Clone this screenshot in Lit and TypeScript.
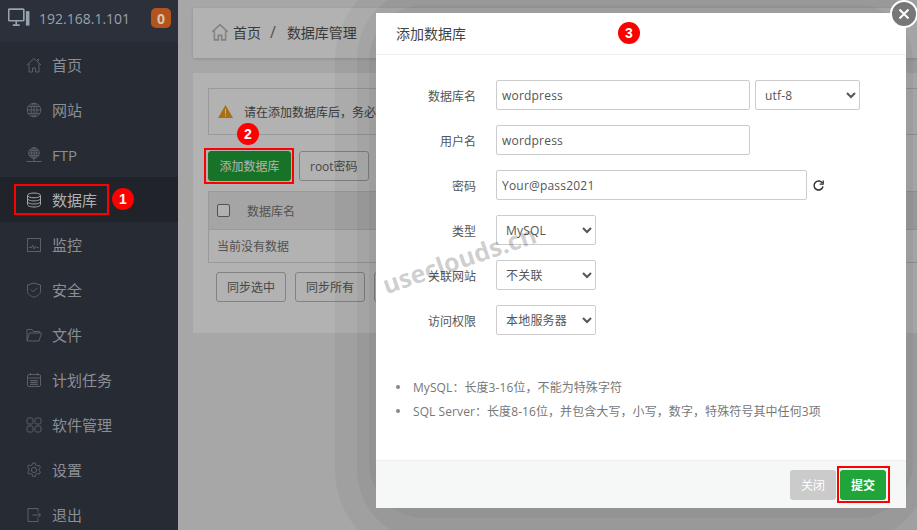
import { LitElement, css, html, svg } from 'lit';
import { customElement } from 'lit/decorators.js';

const icon = (body: unknown, size = 16) => html`<svg class="ico" width=${size} height=${size} viewBox="0 0 16 16" fill="none" stroke="currentColor" stroke-width="1">${body}</svg>`;

const navItems: [string, unknown][] = [
  ['首页', svg`<path d="M1 8 8 1.5 15 8M3 6.5V15h3.5v-4h3v4H13V6.5M11 2.5h1.5V4"/>`],
  ['网站', svg`<circle cx="8" cy="8" r="6.8"/><ellipse cx="8" cy="8" rx="3" ry="6.8"/><path d="M1.2 8h13.6M2 4.6h12M2 11.4h12M8 1.2v13.6"/>`],
  ['FTP', svg`<circle cx="8" cy="6" r="5.3"/><ellipse cx="8" cy="6" rx="2.4" ry="5.3"/><path d="M2.7 6h10.6M3.4 3.5h9.2M3.4 8.5h9.2M8 .7V14M.5 14.5h15"/>`],
  ['数据库', svg`<ellipse cx="8" cy="3.4" rx="6.5" ry="2.4"/><path d="M1.5 3.4v9.2c0 1.3 2.9 2.4 6.5 2.4s6.5-1.1 6.5-2.4V3.4M1.5 6.5C1.5 7.8 4.4 8.9 8 8.9s6.5-1.1 6.5-2.4M1.5 9.6c0 1.3 2.9 2.4 6.5 2.4s6.5-1.1 6.5-2.4"/>`],
  ['监控', svg`<rect x="1.5" y="1.5" width="13" height="13"/><path d="M3 10.5h2.5l1.2-2.5 1.6 4 1.4-2.5 1 1h2"/>`],
  ['安全', svg`<path d="M8 1 14.5 3v6.5c0 2.5-3 4.6-6.5 5.8-3.5-1.2-6.5-3.3-6.5-5.8V3Z"/><path d="m5 7.5 2.3 2.3L11.3 5.8"/>`],
  ['文件', svg`<path d="M1 14V2.5h5l1.5 2h6V6M1 14l2.5-8H15.5L13 14Z"/>`],
  ['计划任务', svg`<rect x="1.5" y="2.5" width="13" height="12" rx="1.5"/><path d="M1.5 6h13M4.5 1v2.5M11.5 1v2.5M4 8.5h8M4 10.5h8M4 12.5h8" /><path d="M6 8v5M8 8v5M10 8v5" stroke-width=".6"/>`],
  ['软件管理', svg`<rect x="1" y="1" width="6" height="6" rx="1.5"/><rect x="9" y="1" width="6" height="6" rx="1.5"/><rect x="1" y="9" width="6" height="6" rx="1.5"/><rect x="9" y="9" width="6" height="6" rx="1.5"/>`],
  ['设置', svg`<circle cx="8" cy="8" r="2.6"/><path d="M6.7 1h2.6l.4 2 1.6.9 1.9-.7 1.3 2.3-1.5 1.3v1.8l1.5 1.3-1.3 2.3-1.9-.7-1.6.9-.4 2H6.7l-.4-2-1.6-.9-1.9.7-1.3-2.3 1.5-1.3V6.5L1.5 5.2l1.3-2.3 1.9.7 1.6-.9Z"/>`],
  ['退出', svg`<path d="M12 4.5V1.5H2v13h10v-3M6.5 8h8M12 5.5 14.5 8 12 10.5"/>`],
];

@customElement('app-root')
export class AppRoot extends LitElement {
  static override styles = css`
    :host {
      display: flex;
      width: 917px;
      height: 530px;
      overflow: hidden;
      position: relative;
      font-family: "Open Sans", "Noto Sans CJK SC", sans-serif;
      font-size: 12px;
      color: #666;
      background: #f0f0f0;
    }
    .side {
      width: 178px;
      flex: none;
      background: #272b33;
      color: #8b8f95;
      z-index: 3;
    }
    .host-row {
      height: 42px;
      box-sizing: border-box;
      background: #2b303a;
      display: flex;
      align-items: center;
      padding: 0 7px 6px 8px;
      color: #97a3ac;
      font-size: 14px;
      gap: 9px;
    }
    .host-row .num {
      flex: 1;
    }
    .badge {
      width: 20px;
      height: 20px;
      border-radius: 5px;
      background: #b4531c;
      color: #d5c3b5;
      font-weight: 700;
      display: flex;
      align-items: center;
      justify-content: center;
    }
    .nav {
      height: 45px;
      display: flex;
      align-items: center;
      padding-left: 26px;
      gap: 10px;
      font-size: 15px;
    }
    .nav .ico {
      color: #5c6066;
    }
    .nav.on {
      background: #202329;
      color: #aeb1b3;
    }
    .nav.on .ico {
      color: #a4a7aa;
    }
    .ico {
      flex: none;
    }
    .main {
      flex: 1;
      min-width: 0;
      padding: 8px 0 0 15px;
      overflow: hidden;
    }
    .crumb {
      width: 900px;
      height: 50px;
      background: #fff;
      box-shadow: 0 1px 3px rgba(0, 0, 0, .15);
      display: flex;
      align-items: center;
      padding: 0 0 2px 18px;
      box-sizing: border-box;
      font-size: 14px;
      color: #555;
      gap: 4px;
    }
    .crumb .sep {
      margin: 0 7px 0 5px;
      color: #777;
      font-size: 16px;
    }
    .crumb .ico {
      color: #bbb;
    }
    .card {
      width: 900px;
      height: 260px;
      margin-top: 15px;
      background: #fff;
      padding: 15px;
      box-sizing: border-box;
    }
    .alert {
      height: 47px;
      box-sizing: border-box;
      border: 1px solid #ddd;
      display: flex;
      align-items: center;
      padding-left: 9px;
      gap: 11px;
      font-size: 12px;
      color: #555;
    }
    .btns {
      display: flex;
      align-items: center;
      gap: 8px;
      margin-top: 16px;
    }
    .btn {
      height: 30px;
      box-sizing: border-box;
      border: 1px solid #bbb;
      border-radius: 3px;
      background: #fff;
      display: flex;
      align-items: center;
      padding: 0 10px;
      color: #666;
      font-size: 12px;
    }
    .btn.green {
      background: #20a53a;
      border-color: #20a53a;
      color: #fff;
      width: 83px;
      justify-content: center;
      padding: 0;
    }
    .tbl {
      margin-top: 10px;
      border: 1px solid #ddd;
      height: 72px;
      box-sizing: border-box;
    }
    .thead {
      height: 38px;
      background: #ececec;
      border-bottom: 1px solid #ddd;
      display: flex;
      align-items: center;
      padding-left: 8px;
      gap: 17px;
      box-sizing: border-box;
      color: #777;
    }
    .check {
      width: 13px;
      height: 13px;
      box-sizing: border-box;
      border: 1px solid #767676;
      border-radius: 2px;
      background: #fff;
    }
    .tempty {
      height: 32px;
      display: flex;
      align-items: center;
      padding-left: 8px;
      color: #777;
    }
    .btns.lower {
      margin: 9px 0 0 8px;
      gap: 9px;
    }
    .veil {
      position: absolute;
      inset: 0 0 0 178px;
      background: rgba(0, 0, 0, .3);
      z-index: 2;
    }
    .mark {
      position: absolute;
      left: 178px;
      top: 0;
      z-index: 2;
    }
    .modal {
      position: absolute;
      left: 376px;
      top: 13px;
      width: 530px;
      height: 495px;
      background: #fff;
      z-index: 4;
      display: flex;
      flex-direction: column;
    }
    .m-head {
      height: 41px;
      box-sizing: content-box;
      flex: none;
      border-bottom: 1px solid #eee;
      display: flex;
      align-items: center;
      padding-left: 20px;
      font-size: 14px;
      color: #444;
    }
    .m-head span {
      margin-bottom: 2px;
    }
    .m-body {
      flex: 1;
      padding: 25px 0 0 20px;
      display: flex;
      flex-direction: column;
    }
    .row {
      display: flex;
      align-items: center;
      height: 30px;
      margin-bottom: 15px;
      gap: 5px;
    }
    .lab {
      width: 80px;
      margin-right: 15px;
      padding-top: 2px;
      text-align: right;
      color: #555;
      flex: none;
    }
    .inp,
    select {
      height: 30px;
      box-sizing: border-box;
      border: 1px solid #ccc;
      border-radius: 2px;
      background: #fff;
      font-family: inherit;
      font-size: 12px;
      color: #555;
      padding: 0 5px;
      outline: none;
      letter-spacing: .2px;
    }
    .w254 {
      width: 254px;
    }
    .w311 {
      width: 311px;
    }
    .w105 {
      width: 105px;
    }
    .w100 {
      width: 100px;
    }
    .row .ico {
      color: #333;
    }
    .tips {
      list-style: none;
      margin: 25px 0 0;
      padding: 0;
      color: #777;
      font-size: 12px;
      letter-spacing: .08px;
    }
    .tips li {
      height: 24px;
      display: flex;
      align-items: center;
      gap: 13px;
    }
    .tips li::before {
      content: "";
      width: 4px;
      height: 4px;
      border-radius: 50%;
      background: #888;
    }
    .m-foot {
      height: 48px;
      flex: none;
      background: #f6f8f8;
      border-top: 1px solid #eee;
      box-sizing: border-box;
      display: flex;
      align-items: center;
      justify-content: flex-end;
      padding-right: 20px;
      gap: 4px;
    }
    .fbtn {
      width: 46px;
      height: 30px;
      border-radius: 3px;
      display: flex;
      align-items: center;
      justify-content: center;
      color: #fff;
      font-size: 12px;
      background: #cbcbcb;
      position: relative;
    }
    .fbtn.ok {
      background: #20a53a;
      font-weight: 700;
    }
    .fbtn.ok::after {
      content: "";
      position: absolute;
      inset: -4px -4px -3px -3px;
      border: 2px solid #f00;
    }
    .close {
      position: absolute;
      left: 890px;
      top: 0;
      width: 24px;
      height: 24px;
      border: 2px solid #fff;
      border-radius: 50%;
      background: #777;
      z-index: 5;
      display: flex;
      align-items: center;
      justify-content: center;
      color: #fff;
    }
    .pin {
      position: absolute;
      width: 22px;
      height: 22px;
      border-radius: 50%;
      background: #f00;
      color: #fff;
      font: 700 14px "Liberation Sans", sans-serif;
      display: flex;
      align-items: center;
      justify-content: center;
      z-index: 6;
    }
    .p1 {
      left: 112px;
      top: 188px;
    }
    .p2 {
      left: 237px;
      top: 123px;
    }
    .p3 {
      left: 618px;
      top: 22px;
    }
    .box {
      position: absolute;
      box-sizing: border-box;
      border: 2px solid #f00;
      z-index: 6;
    }
    .b1 {
      left: 14px;
      top: 184px;
      width: 95px;
      height: 31px;
    }
    .b2 {
      left: 204px;
      top: 148px;
      width: 90px;
      height: 36px;
    }
    .wm {
      position: absolute;
      left: 383px;
      top: 268px;
      font: 700 25px "Open Sans", sans-serif;
      color: rgba(0, 0, 0, .2);
      transform: rotate(-19deg);
      transform-origin: left center;
      z-index: 7;
      pointer-events: none;
      white-space: nowrap;
    }
  `;

  override render() {
    return html`
      <aside class="side">
        <div class="host-row">
          ${icon(svg`<rect x=".5" y="1.5" width="11" height="8.5" rx=".5" stroke-width="1.2"/><path d="M6 10v3M3.5 13.2h5" stroke-width="1.2"/><rect x="13" y="3" width="2.6" height="10.5" fill="currentColor" stroke="none"/>`, 22)}
          <span class="num">192.168.1.101</span>
          <span class="badge">0</span>
        </div>
        ${navItems.map(([label, body]) => html`
          <div class="nav ${label === '数据库' ? 'on' : ''}">${icon(body)}<span>${label}</span></div>
        `)}
      </aside>
      <section class="main">
        <div class="crumb">
          ${icon(svg`<path d="M1 8 8 1.5 15 8M3 6.5V15h3.5v-4h3v4H13V6.5" stroke-width="1.4"/>`, 18)}
          <span>首页</span><span class="sep">/</span><span>数据库管理</span>
        </div>
        <div class="card">
          <div class="alert">
            <svg width="15" height="13" viewBox="0 0 15 13"><path d="M7.5 0 15 13H0Z" fill="#f0a020"/><path d="M7 4h1v5H7ZM7 10h1v1.5H7Z" fill="#fff"/></svg>
            <span>请在添加数据库后，务必到面板设置中确认访问权限</span>
          </div>
          <div class="btns">
            <span class="btn green">添加数据库</span>
            <span class="btn">root密码</span>
            <span class="btn">phpMyAdmin</span>
          </div>
          <div class="tbl">
            <div class="thead"><span class="check"></span><span>数据库名</span></div>
            <div class="tempty">当前没有数据</div>
          </div>
          <div class="btns lower">
            <span class="btn">同步选中</span>
            <span class="btn">同步所有</span>
            <span class="btn">从服务器获取</span>
          </div>
        </div>
      </section>
      <div class="veil"></div>
      <svg class="mark" width="739" height="530" viewBox="178 0 739 530" fill="rgba(0,0,0,.04)">
        <rect x="335" y="-30" width="620" height="590" rx="90"/>
        <rect x="357" y="-12" width="570" height="552" rx="70"/>
        <rect x="369" y="5" width="544" height="513" rx="55"/>
      </svg>

      <div class="modal">
        <div class="m-head"><span>添加数据库</span></div>
        <div class="m-body">
          <div class="row">
            <span class="lab">数据库名</span>
            <input class="inp w254" .value=${'wordpress'} />
            <select class="w105"><option>utf-8</option></select>
          </div>
          <div class="row">
            <span class="lab">用户名</span>
            <input class="inp w254" .value=${'wordpress'} />
          </div>
          <div class="row">
            <span class="lab">密码</span>
            <input class="inp w311" .value=${'Your@pass2021'} />
            ${icon(svg`<path d="M12.8 5.2A5.5 5.5 0 1 0 13.5 9" stroke-width="1.8"/><path d="M13.8 1.8v4.4H9.4" stroke-width="1.6"/>`, 13)}
          </div>
          <div class="row">
            <span class="lab">类型</span>
            <select class="w100"><option>MySQL</option></select>
          </div>
          <div class="row">
            <span class="lab">关联网站</span>
            <select class="w100"><option>不关联</option></select>
          </div>
          <div class="row">
            <span class="lab">访问权限</span>
            <select class="w100"><option>本地服务器</option></select>
          </div>
          <ul class="tips">
            <li>MySQL：长度3-16位，不能为特殊字符</li>
            <li>SQL Server：长度8-16位，并包含大写，小写，数字，特殊符号其中任何3项</li>
          </ul>
        </div>
        <div class="m-foot">
          <span class="fbtn">关闭</span>
          <span class="fbtn ok">提交</span>
        </div>
      </div>
      <div class="close">
        <svg width="12" height="12" viewBox="0 0 12 12" stroke="currentColor" stroke-width="2"><path d="M1.5 1.5l9 9M10.5 1.5l-9 9"/></svg>
      </div>

      <div class="box b1"></div>
      <div class="box b2"></div>
      <span class="pin p1">1</span>
      <span class="pin p2">2</span>
      <span class="pin p3">3</span>
      <span class="wm">useclouds.cn</span>
    `;
  }
}
